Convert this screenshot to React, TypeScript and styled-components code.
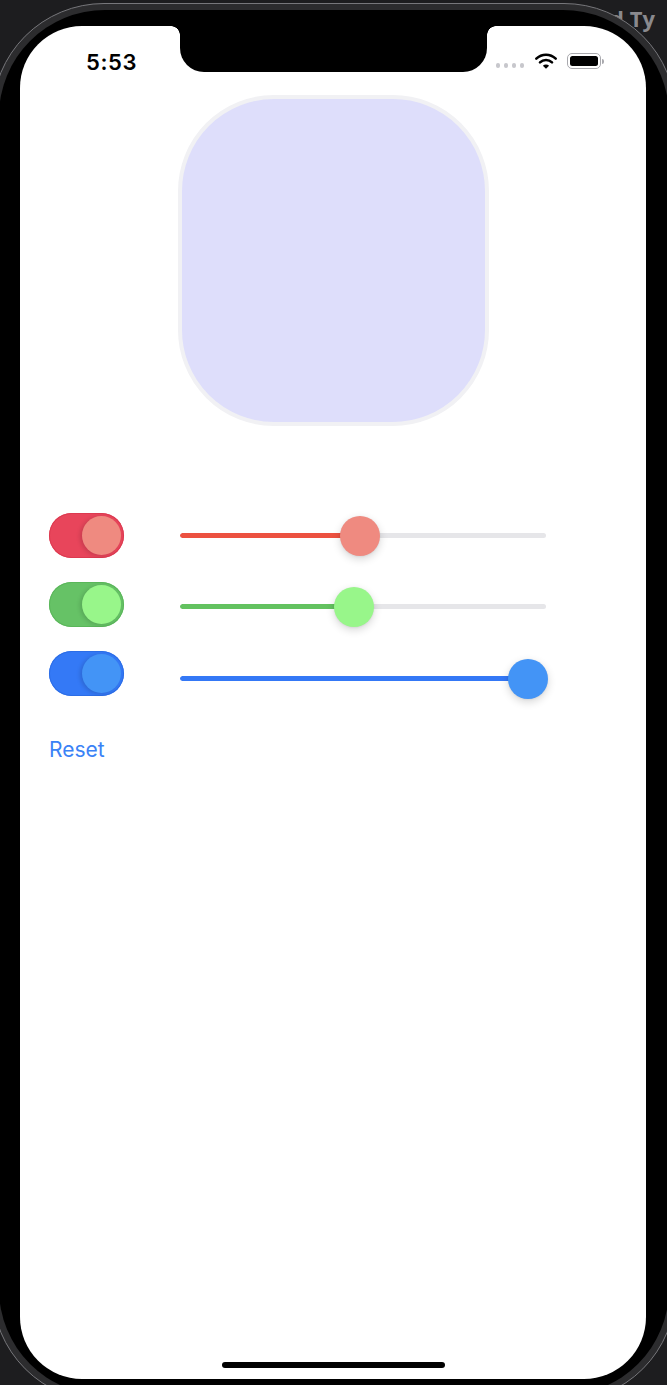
import React from "react";
import styled, { createGlobalStyle } from "styled-components";

const GlobalStyle = createGlobalStyle`
  html, body {
    margin: 0;
    padding: 0;
    background: #1d1d1f;
    overflow: hidden;
    height: 1385px;
  }
  body {
    font-family: Inter, "Noto Sans", "Liberation Sans", sans-serif;
  }
  * { box-sizing: border-box; }
`;

const Stage = styled.div`
  position: relative;
  width: 667px;
  height: 1385px;
  overflow: hidden;
`;

const BackTitle = styled.span`
  position: absolute;
  top: 3px;
  left: 610px;
  font-family: "Open Sans", "Liberation Sans", sans-serif;
  font-weight: 700;
  font-size: 22px;
  color: #8a8a8e;
  white-space: nowrap;
  z-index: 0;
`;

const Phone = styled.div`
  position: relative;
  z-index: 1;
  margin: 3px 0 0 -8px;
  width: 684px;
  height: 1399px;
  border-radius: 112px;
  background: #2c2c2e;
  border: 1px solid #77777b;
  padding: 6px;
`;

const Bezel = styled.div`
  width: 100%;
  height: 100%;
  border-radius: 106px;
  background: #000;
  padding: 16px 23px 0 21px;
`;

const Screen = styled.div`
  position: relative;
  width: 626px;
  height: 1353px;
  border-radius: 62px;
  background: #fff;
  display: flex;
  flex-direction: column;
  overflow: hidden;
`;

const Notch = styled.div`
  position: absolute;
  top: 0;
  left: 160px;
  width: 307px;
  height: 46px;
  background: #000;
  border-radius: 0 0 24px 24px;
  &::before,
  &::after {
    content: "";
    position: absolute;
    top: 0;
    width: 9px;
    height: 9px;
  }
  &::before {
    left: -9px;
    background: radial-gradient(circle at 0 100%, transparent 8.5px, #000 9px);
  }
  &::after {
    right: -9px;
    background: radial-gradient(circle at 100% 100%, transparent 8.5px, #000 9px);
  }
`;

const StatusBar = styled.div`
  height: 69px;
  display: flex;
  justify-content: space-between;
  align-items: flex-start;
  padding: 23px 42px 0 66px;
`;

const Time = styled.span`
  font-family: Inter, "Liberation Sans", sans-serif;
  font-weight: 600;
  font-size: 22px;
  line-height: 26px;
  letter-spacing: 0.6px;
  color: #000;
`;

const StatusIcons = styled.div`
  display: flex;
  align-items: center;
  gap: 9px;
  padding-top: 3px;
`;

const Dots = styled.div`
  display: flex;
  gap: 3.5px;
  margin-top: 9px;
  margin-right: 1px;
`;

const Dot = styled.span`
  width: 4.5px;
  height: 4.5px;
  border-radius: 50%;
  background: #c7c7cc;
`;

const Battery = styled.div`
  display: flex;
  align-items: center;
  gap: 1px;
`;

const BatteryBody = styled.div`
  width: 34px;
  height: 16px;
  border-radius: 5px;
  border: 1.2px solid #a9a9ae;
  padding: 2px;
`;

const BatteryFill = styled.div`
  width: 100%;
  height: 100%;
  border-radius: 2.5px;
  background: #000;
`;

const BatteryCap = styled.div`
  width: 2px;
  height: 5px;
  border-radius: 0 2px 2px 0;
  background: #a9a9ae;
`;

const Preview = styled.div`
  align-self: center;
  width: 311px;
  height: 331px;
  border-radius: 96px;
  border: 4px solid #f1f1f4;
  background: #dedefb;
`;

const Controls = styled.div`
  margin-top: 87px;
  padding-left: 29px;
  display: flex;
  flex-direction: column;
  gap: 24px;
`;

const Row = styled.div`
  display: flex;
  align-items: flex-start;
  gap: 56px;
  height: 45px;
`;

const Toggle = styled.div<{ $track: string; $rim: string }>`
  position: relative;
  width: 75px;
  height: 45px;
  border-radius: 23px;
  background: ${(p) => p.$track};
  box-shadow: inset 0 0 0 1px ${(p) => p.$rim};
  flex-shrink: 0;
`;

const Knob = styled.div<{ $color: string }>`
  position: absolute;
  top: 3px;
  right: 3px;
  width: 39px;
  height: 39px;
  border-radius: 50%;
  background: ${(p) => p.$color};
  box-shadow: -2px 1px 4px rgba(0, 0, 0, 0.14);
`;

const SliderWrap = styled.div<{ $nudge: number }>`
  position: relative;
  width: 366px;
  height: 45px;
  margin-top: ${(p) => p.$nudge}px;
  display: flex;
  align-items: center;
`;

const Track = styled.div`
  position: relative;
  width: 100%;
  height: 5px;
  border-radius: 3px;
  background: #e6e6e9;
  overflow: hidden;
`;

const Fill = styled.div<{ $color: string }>`
  height: 100%;
  border-radius: 3px;
  background: ${(p) => p.$color};
`;

const Thumb = styled.div<{ $color: string }>`
  position: absolute;
  top: 3px;
  width: 40px;
  height: 40px;
  margin-left: -20px;
  border-radius: 50%;
  background: ${(p) => p.$color};
  box-shadow: 0 3px 8px rgba(0, 0, 0, 0.16), 0 0.5px 2px rgba(0, 0, 0, 0.08);
`;

const ResetButton = styled.button`
  align-self: flex-start;
  margin: 42px 0 0 29px;
  padding: 0;
  border: none;
  background: none;
  font-family: Inter, "Liberation Sans", sans-serif;
  font-size: 21px;
  line-height: 24px;
  color: #3a82f6;
  cursor: pointer;
`;

const HomeIndicator = styled.div`
  align-self: center;
  margin-top: auto;
  margin-bottom: 11px;
  width: 223px;
  height: 6px;
  border-radius: 3px;
  background: #000;
`;

const Wifi = () => (
  <svg width="24" height="18" viewBox="0 0 24 18">
    <g fill="none" stroke="#000" strokeWidth="2.6" strokeLinecap="round">
      <path d="M2.3 6.6 A14 14 0 0 1 21.7 6.6" />
      <path d="M6 10.4 A8.6 8.6 0 0 1 18 10.4" />
    </g>
    <path d="M12 16.8 L8.9 13.7 A4.4 4.4 0 0 1 15.1 13.7 Z" fill="#000" />
  </svg>
);

const rows = [
  { track: "#e8455b", rim: "#dc3a50", knob: "#ef8a80", fill: "#ec5140", center: 180, nudge: 0 },
  { track: "#66c266", rim: "#5ab65a", knob: "#98f68a", fill: "#63c260", center: 174, nudge: 2 },
  { track: "#3479f6", rim: "#2c6de6", knob: "#4394f6", fill: "#3478f6", center: 348, nudge: 5 },
];

export default function App() {
  return (
    <>
      <GlobalStyle />
      <Stage>
        <BackTitle>d Ty</BackTitle>
        <Phone>
          <Bezel>
            <Screen>
              <Notch />
              <StatusBar>
                <Time>5:53</Time>
                <StatusIcons>
                  <Dots>
                    <Dot />
                    <Dot />
                    <Dot />
                    <Dot />
                  </Dots>
                  <Wifi />
                  <Battery>
                    <BatteryBody>
                      <BatteryFill />
                    </BatteryBody>
                    <BatteryCap />
                  </Battery>
                </StatusIcons>
              </StatusBar>
              <Preview />
              <Controls>
                {rows.map((r, i) => (
                  <Row key={i}>
                    <Toggle $track={r.track} $rim={r.rim}>
                      <Knob $color={r.knob} />
                    </Toggle>
                    <SliderWrap $nudge={r.nudge}>
                      <Track>
                        <Fill $color={r.fill} style={{ width: `${r.center}px` }} />
                      </Track>
                      <Thumb $color={r.knob} style={{ left: `${r.center}px` }} />
                    </SliderWrap>
                  </Row>
                ))}
              </Controls>
              <ResetButton>Reset</ResetButton>
              <HomeIndicator />
            </Screen>
          </Bezel>
        </Phone>
      </Stage>
    </>
  );
}
